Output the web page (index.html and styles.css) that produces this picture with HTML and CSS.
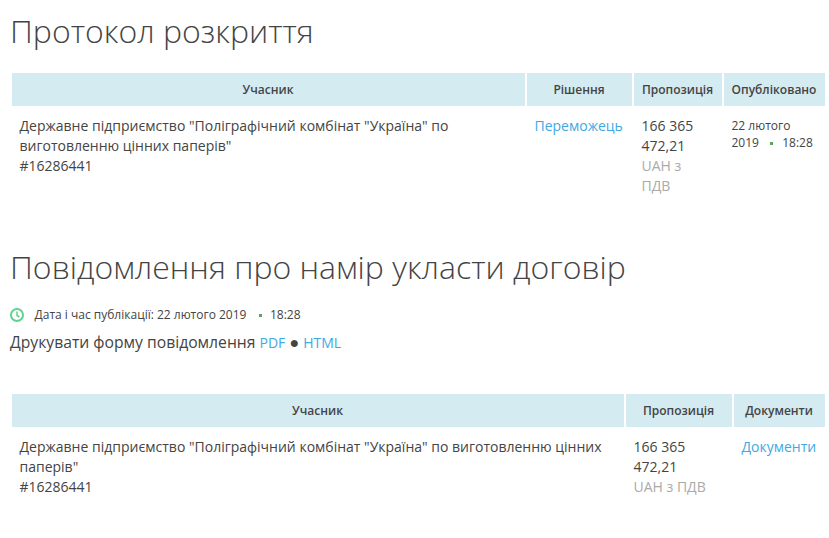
FILE: index.html
```html
<!DOCTYPE html>
<html lang="uk">
<head>
<meta charset="utf-8">
<title>Протокол розкриття</title>
<link rel="stylesheet" href="styles.css">
</head>
<body>
<h1 class="title">Протокол розкриття</h1>
<table class="grid grid-first">
  <colgroup><col class="c1"><col class="c2"><col class="c3"><col class="c4"></colgroup>
  <thead><tr><th>Учасник</th><th>Рішення</th><th>Пропозиція</th><th>Опубліковано</th></tr></thead>
  <tbody><tr>
    <td>Державне підприємство "Поліграфічний комбінат "Україна" по виготовленню цінних паперів"<br>#16286441</td>
    <td><a href="#">Переможець</a></td>
    <td>166 365 472,21 <span class="muted">UAH з ПДВ</span></td>
    <td class="date">22 лютого 2019 <span class="dot"></span> 18:28</td>
  </tr></tbody>
</table>
<h1 class="title title-second">Повідомлення про намір укласти договір</h1>
<div class="published">
  <svg class="clock" width="16" height="16" viewBox="0 0 16 16" fill="none" stroke="#5fd38d" stroke-width="2"><circle cx="8" cy="8" r="6"/><path d="M8 4.5V8.5L10.5 10" stroke-width="1.5"/></svg>
  <span>Дата і час публікації: 22 лютого 2019</span><span class="dot dot-wide"></span><span>18:28</span>
</div>
<p class="print">Друкувати форму повідомлення <a href="#">PDF</a> <span class="bullet">●</span> <a href="#">HTML</a></p>
<table class="grid">
  <colgroup><col class="d1"><col class="d2"><col class="d3"></colgroup>
  <thead><tr><th>Учасник</th><th>Пропозиція</th><th>Документи</th></tr></thead>
  <tbody><tr>
    <td>Державне підприємство "Поліграфічний комбінат "Україна" по виготовленню цінних паперів"<br>#16286441</td>
    <td>166 365 472,21 <span class="muted">UAH з ПДВ</span></td>
    <td><a href="#">Документи</a></td>
  </tr></tbody>
</table>
</body>
</html>
```
FILE: styles.css
```css
* { box-sizing: border-box; }
html, body { background: #fff; }
body {
  margin: 0;
  padding: 0 4px 0 10px;
  font-family: "Open Sans", sans-serif;
  font-size: 14px;
  line-height: 20px;
  color: #444;
}
.title {
  margin: 0;
  padding-top: 10px;
  font-size: 32px;
  line-height: 42px;
  font-weight: 300;
  color: #444;
}
.title-second { padding-top: 0; margin-top: 32px; }
.grid {
  table-layout: fixed;
  width: 815px;
  border-collapse: separate;
  border-spacing: 2px;
}
.grid-first { margin-top: 19px; }
.c1 { width: 513px; } .c2 { width: 105px; } .c3 { width: 88px; } .c4 { width: 101px; }
.d1 { width: 612px; } .d2 { width: 106px; } .d3 { width: 91px; }
.grid th {
  height: 33px;
  padding: 0 5px 0 4px;
  background: #d5ebf2;
  font-size: 12px;
  font-weight: 600;
  line-height: 16px;
  text-align: center;
  color: #444;
}
.grid td {
  padding: 8px 9px 16px 7.5px;
  vertical-align: top;
  color: #444;
}
a { color: #3ea9e2; text-decoration: none; }
.muted { display: block; color: #aaa; }
.grid .date { padding: 8.5px 8px 16px 7.5px; font-size: 12px; line-height: 17px; }
.dot {
  display: inline-block;
  width: 3px;
  height: 3px;
  margin: 0 6px 0 8px;
  background: #5aa45f;
  vertical-align: middle;
}
.published {
  display: flex;
  align-items: center;
  margin-top: 17px;
  font-size: 12px;
  line-height: 20px;
}
.clock { margin: 0 9.5px 0 -1px; }
.published .dot-wide { margin: 0 8px 0 12.5px; }
.print { margin: 7px 0 0; height: 41px; font-size: 15.7px; }
.print a { font-size: 14px; }
.bullet { font-size: 16px; }
.print + .grid { margin-top: 19px; }
```
